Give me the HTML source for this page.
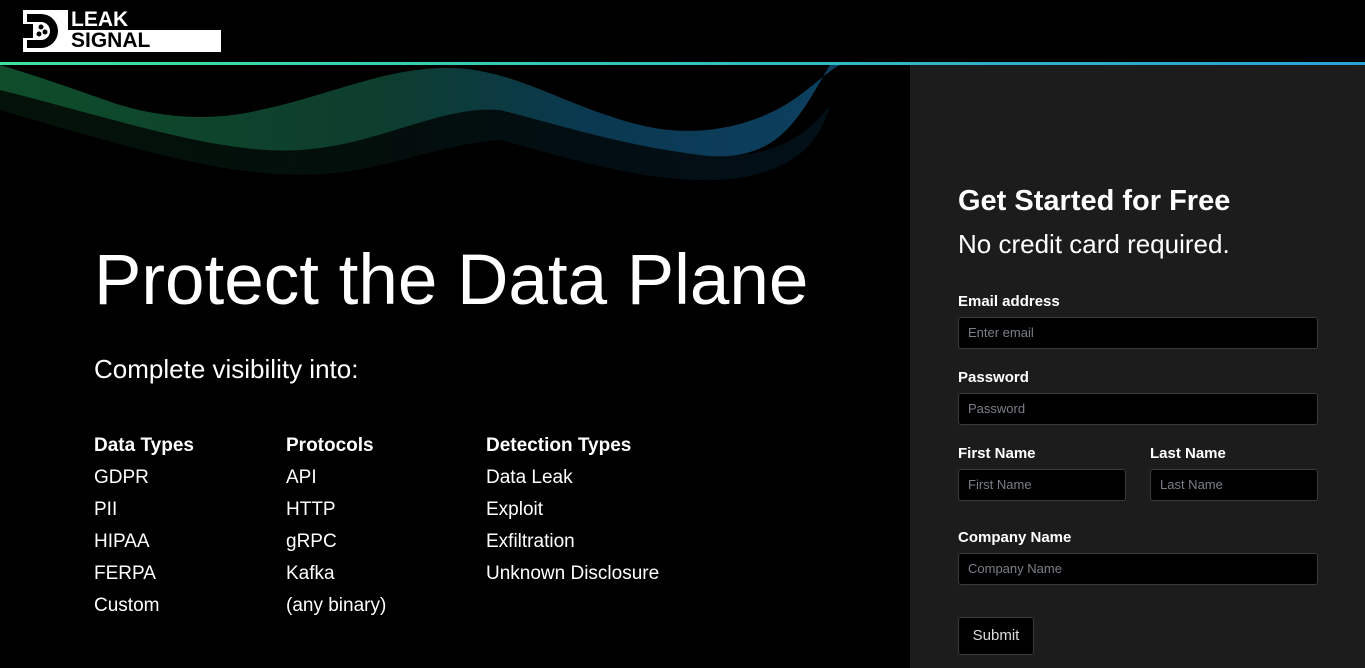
<!DOCTYPE html>
<html><head><meta charset="utf-8"><style>
*{margin:0;padding:0;box-sizing:border-box}
body{width:1365px;height:668px;background:#000;font-family:"Liberation Sans",sans-serif;color:#fff;overflow:hidden;position:relative}
.line{position:absolute;left:0;top:62px;width:1365px;height:3px;background:linear-gradient(90deg,#3de3a0,#2aa0d8)}
.panel{position:absolute;left:910px;top:65px;width:455px;height:603px;background:#1c1c1c}
.abs{position:absolute}
h1{position:absolute;left:94px;top:240px;font-weight:300;font-size:71px;white-space:nowrap}
.sub{left:94px;top:354px;font-size:26px;font-weight:300}
.col{position:absolute;top:430px;font-size:19px;line-height:32px;font-weight:300}
.col b{font-weight:700;display:block}
label{position:absolute;font-size:15px;font-weight:700;color:#fff}
.inp{position:absolute;height:32px;background:#000;border:1px solid #3a3a3a;border-radius:3px;color:#7a7f87;font-size:13px;padding-left:9px;line-height:30px}
</style></head><body>
<div class="abs" style="left:23px;top:10px;width:198px;height:42px;background:#000"></div>
<div class="abs" style="left:23px;top:10px;width:45px;height:42px;background:#fff"></div>
<div class="abs" style="left:68px;top:30px;width:153px;height:22px;background:#fff"></div>
<svg class="abs" style="left:23px;top:10px" width="45" height="42" viewBox="0 0 45 42">
<path d="M4 4h14a17 17 0 0 1 0 34H4v-8h14a9 9 0 0 0 0-18H4z" fill="#000"/>
<rect x="0" y="14" width="10" height="14" fill="#000"/>
<circle cx="18" cy="17" r="2.5" fill="#000"/><circle cx="16" cy="24" r="2.5" fill="#000"/><circle cx="22" cy="22" r="2.5" fill="#000"/>
</svg>
<div class="abs" style="left:71px;top:9px;font-size:21px;font-weight:700;line-height:22px;color:#fff">LEAK</div>
<div class="abs" style="left:71px;top:30px;font-size:21px;font-weight:700;line-height:22px;color:#000">SIGNAL</div>
<div class="line"></div>
<svg class="abs" style="left:0;top:65px" width="910" height="120" viewBox="0 0 910 120">
<defs>
<linearGradient id="g" x1="0" x2="1"><stop offset="0" stop-color="#1e9a55"/><stop offset=".45" stop-color="#1b7a5a"/><stop offset=".7" stop-color="#1470a0"/><stop offset="1" stop-color="#1a80c0"/></linearGradient>
</defs>
<g>
<path d="M0 0C50 15 90 30 120 40C170 55 220 55 260 45C330 30 380 5 440 3C510 0 560 40 640 60C700 75 760 60 800 30C820 15 830 5 840 0L830 0C800 50 780 100 700 90C620 80 560 60 500 45C440 40 380 80 300 85C220 90 120 55 0 25Z" fill="url(#g)" opacity=".5"/>
<path d="M0 25C120 55 220 90 300 85C380 80 440 40 500 45C560 60 620 80 700 90C760 95 800 80 830 40C820 80 790 110 720 115C640 118 560 90 500 75C430 80 380 110 300 110C220 110 120 80 0 45Z" fill="url(#g)" opacity=".12"/>
</g>
</svg>
<h1>Protect the Data Plane</h1>
<div class="abs sub">Complete visibility into:</div>
<div class="col" style="left:94px"><b>Data Types</b>GDPR<br>PII<br>HIPAA<br>FERPA<br>Custom</div>
<div class="col" style="left:286px"><b>Protocols</b>API<br>HTTP<br>gRPC<br>Kafka<br>(any binary)</div>
<div class="col" style="left:486px"><b>Detection Types</b>Data Leak<br>Exploit<br>Exfiltration<br>Unknown Disclosure</div>
<div class="panel"></div>
<div class="abs" style="left:958px;top:185px;font-size:29px;font-weight:700">Get Started for Free</div>
<div class="abs" style="left:958px;top:229px;font-size:26px;font-weight:300">No credit card required.</div>
<label style="left:958px;top:293px">Email address</label>
<div class="inp" style="left:958px;top:317px;width:360px">Enter email</div>
<label style="left:958px;top:369px">Password</label>
<div class="inp" style="left:958px;top:393px;width:360px">Password</div>
<label style="left:958px;top:445px">First Name</label>
<div class="inp" style="left:958px;top:469px;width:168px">First Name</div>
<label style="left:1150px;top:445px">Last Name</label>
<div class="inp" style="left:1150px;top:469px;width:168px">Last Name</div>
<label style="left:958px;top:529px">Company Name</label>
<div class="inp" style="left:958px;top:553px;width:360px">Company Name</div>
<div class="abs" style="left:958px;top:617px;width:76px;height:38px;background:#000;border:1px solid #3a3a3a;border-radius:3px;font-size:15px;line-height:36px;text-align:center;color:#ddd">Submit</div>
</body></html>
